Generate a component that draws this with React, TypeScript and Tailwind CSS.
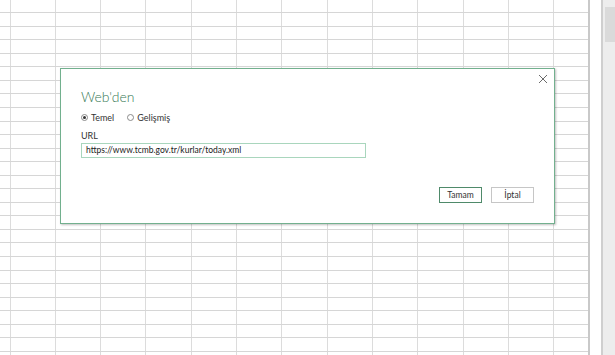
import React from "react";

const ROWS = 26;
const COLS = 13;

function Sheet() {
  return (
    <div className="flex flex-col w-[588px] h-[355px] overflow-hidden bg-white">
      <div className="h-[12.2px] shrink-0 flex">
        <div className="w-[9.5px] shrink-0" />
        {Array.from({ length: COLS }).map((_, c) => (
          <div key={c} className="w-[45.33px] shrink-0 border-l border-[#dcdcdc]" />
        ))}
      </div>
      {Array.from({ length: ROWS }).map((_, r) => (
        <div key={r} className="h-[13.56px] shrink-0 flex border-t border-[#d6d6d6]">
          <div className="w-[9.5px] shrink-0" />
          {Array.from({ length: COLS }).map((_, c) => (
            <div key={c} className="w-[45.33px] shrink-0 border-l border-[#dcdcdc]" />
          ))}
        </div>
      ))}
    </div>
  );
}

function Radio({ checked, label }: { checked?: boolean; label: string }) {
  return (
    <div className="flex items-center gap-[3px]">
      <span className="w-[7px] h-[7px] rounded-full border border-[#8a8a8a] flex items-center justify-center bg-white">
        {checked && <span className="w-[3px] h-[3px] rounded-full bg-[#333]" />}
      </span>
      <span className="text-[9px] text-[#333] leading-none">{label}</span>
    </div>
  );
}

export default function App() {
  return (
    <div
      className="relative w-[615px] h-[355px] overflow-hidden bg-white flex"
      style={{ fontFamily: 'Lato, "Open Sans", sans-serif' }}
    >
      <Sheet />
      <div className="w-[2px] h-full bg-[#c9c9c9]" />
      <div className="w-[11px] h-full bg-white" />
      <div className="w-[2px] h-full bg-[#cfcfcf]" />
      <div className="flex-1 h-full bg-[#ededed] pt-[7px] pl-[2px]">
        <div className="h-[35px] bg-[#dadada]" />
      </div>

      <div className="absolute left-[60px] top-[68px] w-[495px] h-[156px] bg-white border border-[#72b08e] shadow-[1px_1px_2px_rgba(0,0,0,0.25)] flex flex-col pl-[20px] pr-[8px]">
        <div className="flex justify-end pt-[4px] h-[16px]">
          <svg width="10" height="10" viewBox="0 0 10 10" className="mt-[1px] mr-[-2px]">
            <path d="M1 1 L9 9 M9 1 L1 9" stroke="#6b6b6b" strokeWidth="1" fill="none" />
          </svg>
        </div>
        <div className="text-[14px] font-light leading-none text-[#387a56] mt-[5px]">Web'den</div>
        <div className="flex items-center gap-[13px] mt-[9px]">
          <Radio checked label="Temel" />
          <Radio label="Gelişmiş" />
        </div>
        <div className="text-[9px] leading-none text-[#333] mt-[9px]">URL</div>
        <div className="mt-[3px] w-[285px] h-[15px] border border-[#a9d6bd] flex items-center px-[4px] text-[8.5px] text-[#222] leading-none">
          https://www.tcmb.gov.tr/kurlar/today.xml
        </div>
        <div className="flex justify-end gap-[9px] mt-[29px] pr-[12px]">
          <div className="w-[43px] h-[16px] border-[1.5px] border-[#4f8a6a] flex items-center justify-center text-[8.5px] text-[#333]">
            Tamam
          </div>
          <div className="w-[43px] h-[16px] border border-[#c6c6c6] flex items-center justify-center text-[8.5px] text-[#333]">
            İptal
          </div>
        </div>
      </div>
    </div>
  );
}
